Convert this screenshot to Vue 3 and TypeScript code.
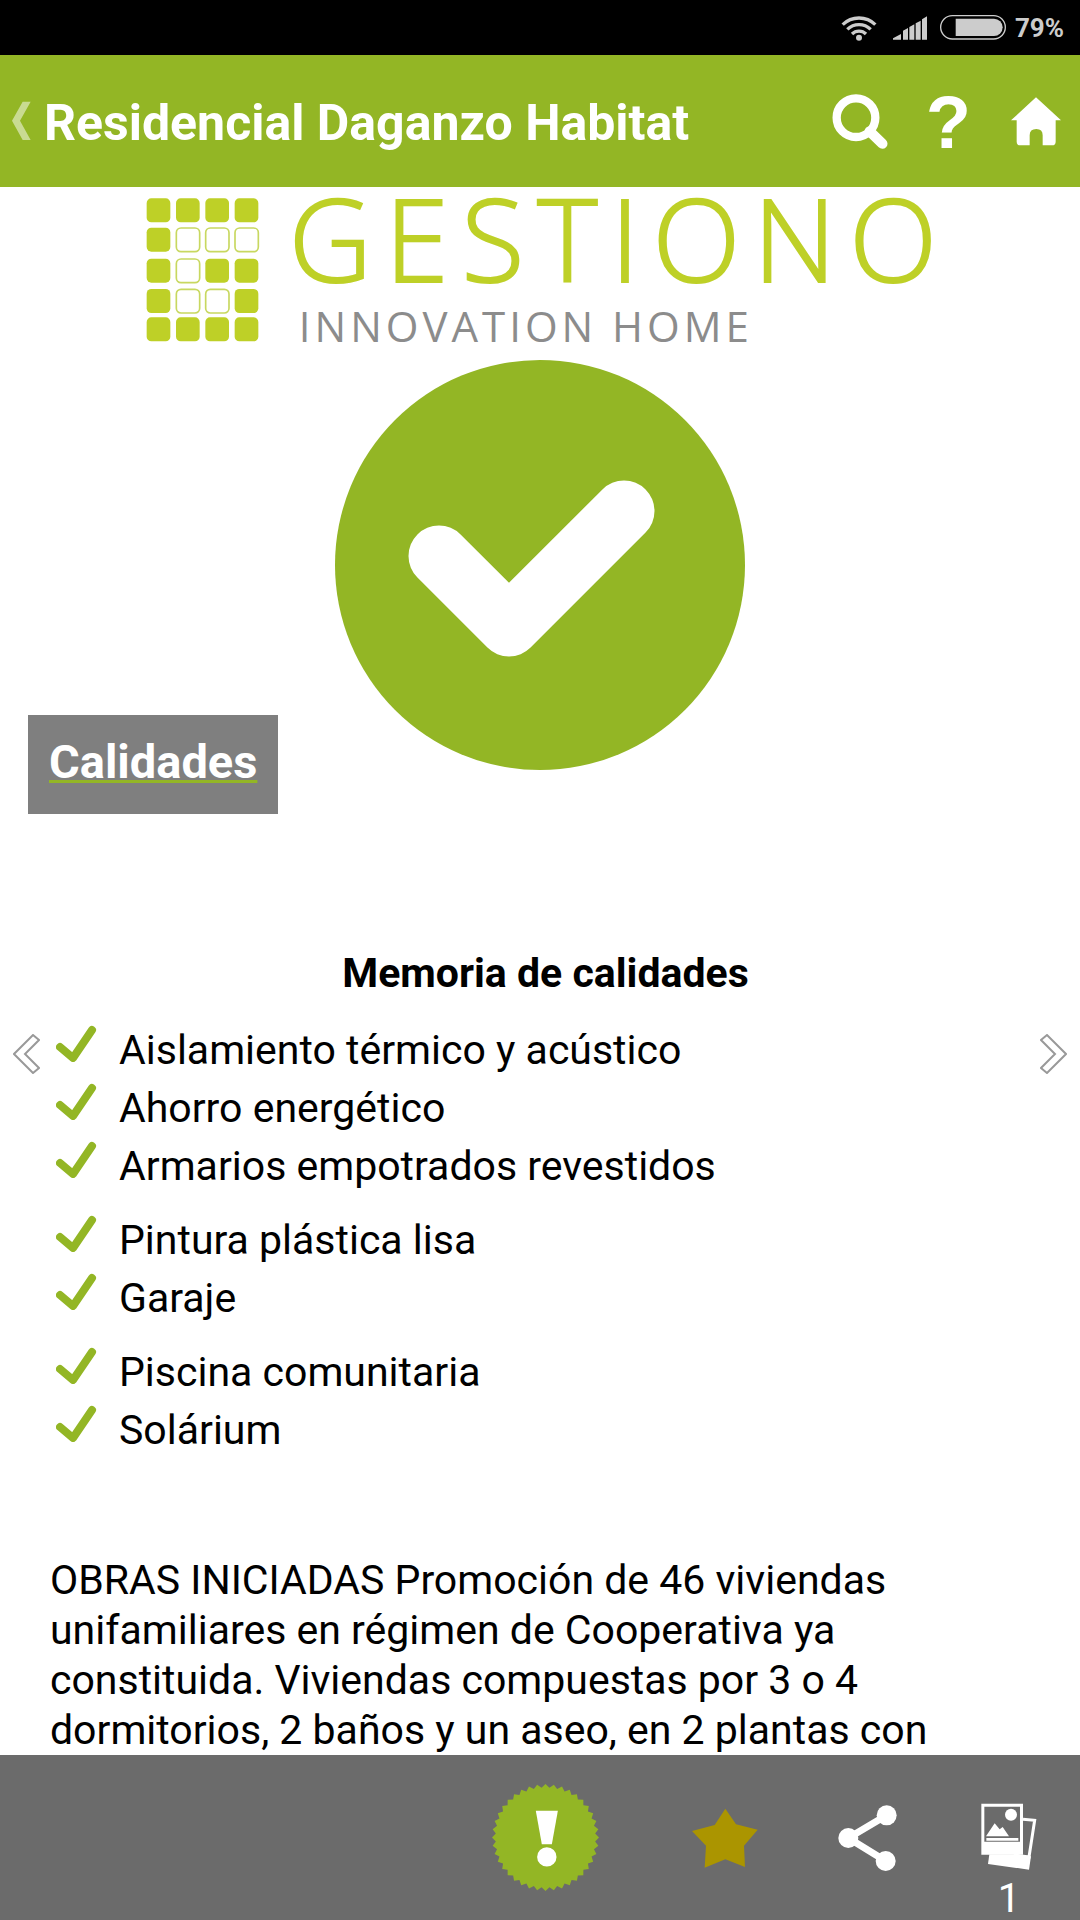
<script setup lang="ts">
interface Cell { x: number; y: number; filled: boolean }

const gridRows: string[] = ['1111', '1000', '1011', '1001', '1111']
const rowTops: number[] = [54, 142, 235, 326, 411]
const cells: Cell[] = gridRows.flatMap((row, r) =>
  row.split('').map((c, i) => ({ x: 52 + i * 88, y: rowTops[r], filled: c === '1' })),
)

const groups: string[][] = [
  ['Aislamiento térmico y acústico', 'Ahorro energético', 'Armarios empotrados revestidos'],
  ['Pintura plástica lisa', 'Garaje'],
  ['Piscina comunitaria', 'Solárium'],
]

const teeth = 40
const sealPoints: string = Array.from({ length: teeth * 2 }, (_, i) => {
  const radius = i % 2 === 0 ? 160 : 149
  const angle = (Math.PI * i) / teeth
  return `${(160 + radius * Math.sin(angle)).toFixed(1)},${(160 - radius * Math.cos(angle)).toFixed(1)}`
}).join(' ')
</script>

<template>
  <div class="app">
    <div class="status">
      <svg class="wifi" width="36" height="26" viewBox="124 42 108 78" aria-hidden="true">
        <circle cx="178" cy="110" r="9" />
        <g fill="none" stroke-width="10">
          <path d="M157 99a30 30 0 0 1 42 0" />
          <path d="M143 85a50 50 0 0 1 70 0" />
          <path d="M129 71a70 70 0 0 1 98 0" />
        </g>
      </svg>
      <svg class="signal" width="34" height="24" viewBox="279 48 102 72" aria-hidden="true">
        <path d="M279 119v-4l24-13v17zM309 119V92l15-8v35zM328 119V81l15-8v46zM347 119V70l15-8v57zM366 119V58l15-9v70z" />
      </svg>
      <svg class="battery" width="66" height="25" viewBox="421 45 198 75" aria-hidden="true">
        <rect x="423" y="47" width="194" height="70" rx="35" fill="none" stroke-width="4" />
        <path d="M468 56H583a26 26 0 0 1 0 52H468z" />
      </svg>
      <span class="percent">79%</span>
    </div>

    <header class="bar">
      <button class="back" aria-label="Volver">
        <svg width="20" height="40" viewBox="36 184 60 120"><path d="M68 186H92L60 243L92 301H68L36 243Z" fill="#c9db92" /></svg>
      </button>
      <h1>Residencial Daganzo Habitat</h1>
      <button class="tool" aria-label="Buscar">
        <svg width="56" height="55" viewBox="95 281 168 165">
          <circle cx="167" cy="352" r="58" fill="none" stroke="#fff" stroke-width="25" />
          <path d="M208 393L246 430" stroke="#fff" stroke-width="31" stroke-linecap="round" />
        </svg>
      </button>
      <button class="tool help" aria-label="Ayuda">?</button>
      <button class="tool" aria-label="Inicio">
        <svg width="50" height="49" viewBox="633 290 150 147">
          <path d="M708 291L783 360H767V424Q767 435 756 435H728V405Q728 386 709 386Q689 386 689 405V435H661Q650 435 650 424V360H633Z" fill="#fff" />
        </svg>
      </button>
    </header>

    <div class="stage">
      <main>
        <div class="logo">
          <svg width="114" height="144" viewBox="50 53 342 432" aria-hidden="true">
            <template v-for="cell in cells" :key="`${cell.x}-${cell.y}`">
              <rect v-if="cell.filled" :x="cell.x" :y="cell.y" width="71" height="72" rx="14" fill="#bed027" />
              <rect v-else :x="cell.x + 1" :y="cell.y + 1" width="70" height="71" rx="14" fill="#fff" stroke="#c8d860" stroke-width="5" />
            </template>
          </svg>
          <div class="words">
            <div class="brand">GESTIONO</div>
            <div class="tagline">INNOVATION HOME</div>
          </div>
        </div>

        <div class="hero">
          <a class="label" href="#calidades">Calidades</a>
          <svg class="seal" width="410" height="410" viewBox="0 0 410 410" aria-hidden="true">
            <circle cx="205" cy="205" r="205" fill="#93b625" />
            <path d="M104 196L174 266L289 151" fill="none" stroke="#fff" stroke-width="61" stroke-linecap="round" stroke-linejoin="round" />
          </svg>
        </div>

        <section id="calidades" class="text">
          <h2>Memoria de calidades</h2>
          <ul v-for="(group, g) in groups" :key="g">
            <li v-for="item in group" :key="item">
              <svg width="42" height="38" viewBox="0 0 42 38" aria-hidden="true">
                <path d="M4 23L17 34L36 6" fill="none" stroke="#93b625" stroke-width="8" stroke-linecap="round" stroke-linejoin="round" />
              </svg>
              <span>{{ item }}</span>
            </li>
          </ul>
          <p>
            OBRAS INICIADAS Promoción de 46 viviendas unifamiliares en régimen de Cooperativa ya
            constituida. Viviendas compuestas por 3 o 4 dormitorios, 2 baños y un aseo, en 2 plantas con
          </p>
        </section>
      </main>

      <button class="arrow prev" aria-label="Anterior">
        <svg width="27" height="40" viewBox="0 0 27 40"><path d="M20 1L26 6L12 20L26 34L20 39L1 20Z" /></svg>
      </button>
      <button class="arrow next" aria-label="Siguiente">
        <svg width="27" height="40" viewBox="0 0 27 40"><path d="M7 1L1 6L15 20L1 34L7 39L26 20Z" /></svg>
      </button>

      <footer>
        <button class="action alert" aria-label="Aviso">
          <svg width="107" height="107" viewBox="0 0 320 320">
            <polygon :points="sealPoints" fill="#93b625" />
            <path d="M131 80H197L179 180H149Z" fill="#fff" />
            <circle cx="164" cy="218" r="29" fill="#fff" />
          </svg>
        </button>
        <button class="action" aria-label="Favorito">
          <svg width="66" height="60" viewBox="696 203 198 180">
            <path d="M796 205L828 252L893 268L852 316L855 380L796 357L734 382L738 316L696 272L764 254Z" fill="#ab9500" />
          </svg>
        </button>
        <button class="action" aria-label="Compartir">
          <svg width="59" height="66" viewBox="173 193 177 198">
            <path d="M319 224L204 292L316 361" fill="none" stroke="#fff" stroke-width="21" />
            <g fill="#fff"><circle cx="319" cy="224" r="30" /><circle cx="204" cy="292" r="30" /><circle cx="316" cy="361" r="30" /></g>
          </svg>
        </button>
        <button class="action gallery" aria-label="Imágenes: 1">
          <svg width="56" height="67" viewBox="602 190 168 201">
            <path d="M728 239L763 242L746 352L700 346" fill="none" stroke="#fff" stroke-width="9" />
            <path d="M627 344H700L752 350L746 390L623 373Z" fill="#fff" />
            <path d="M603 192H728V345H603Z" fill="#fff" />
            <path d="M612 201H719V306H612Z" fill="#6b6b6b" />
            <circle cx="692" cy="225" r="18" fill="#fff" />
            <path d="M617 290L643 251L658 269L667 262L686 290Z" fill="#fff" />
            <path d="M618 299H714" stroke="#fff" stroke-width="8" />
          </svg>
          <span>1</span>
        </button>
      </footer>
    </div>
  </div>
</template>

<style>
body {
  margin: 0;
  background: #fff;
}
</style>

<style scoped>
.app {
  display: flex;
  flex-direction: column;
  min-height: 100vh;
  font-family: Roboto, "Liberation Sans", sans-serif;
  color: #000;
}
button {
  display: flex;
  align-items: center;
  justify-content: center;
  margin: 0;
  padding: 0;
  border: 0;
  background: none;
  color: #fff;
  font-family: inherit;
}
svg {
  display: block;
  flex: none;
}
.status {
  display: flex;
  flex: none;
  align-items: center;
  justify-content: flex-end;
  height: 55px;
  padding-right: 16px;
  background: #000;
  color: #ccc;
  fill: #ccc;
}
.status svg {
  stroke: none;
}
.wifi g,
.battery rect {
  stroke: #ccc;
}
.signal {
  margin-left: 16px;
}
.battery {
  margin: 0 9px 0 13px;
}
.percent {
  font-size: 26px;
  font-weight: 700;
  line-height: 32px;
}
.bar {
  display: flex;
  flex: none;
  align-items: center;
  height: 132px;
  padding: 0 19px 0 12px;
  background: #93b625;
}
h1 {
  flex: 1;
  margin: 0 0 0 12px;
  padding-top: 4px;
  color: #fff;
  font-size: 50px;
  font-weight: 700;
  line-height: 60px;
  white-space: nowrap;
}
.tool {
  margin-left: 40px;
}
.help {
  margin-left: 38px;
  padding-top: 4px;
  font-family: "Liberation Sans", Arial, sans-serif;
  font-size: 74px;
  font-weight: 700;
  line-height: 80px;
}
.stage {
  position: relative;
  display: flex;
  flex: 1;
  flex-direction: column;
}
main {
  flex: 1;
}
.logo {
  display: flex;
  justify-content: center;
  gap: 29px;
  padding-left: 16px;
}
.logo svg {
  margin-top: 11px;
}
.words {
  font-family: "Open Sans", "Noto Sans", sans-serif;
  white-space: nowrap;
}
.brand {
  margin-bottom: 15px;
  color: #bed027;
  font-size: 115px;
  font-weight: 300;
  line-height: 102px;
  letter-spacing: 13px;
  -webkit-text-stroke: 2px #bed027;
}
.tagline {
  margin-left: 10px;
  color: #8c8c8c;
  font-size: 42px;
  font-weight: 400;
  line-height: 44px;
  letter-spacing: 4px;
}
.hero {
  display: grid;
  grid-template-columns: 1fr auto 1fr;
  align-items: start;
  padding-top: 12px;
}
.hero .label {
  align-self: end;
  justify-self: start;
  margin-left: 28px;
  margin-top: 355px;
  padding: 17px 21px 22px;
  background: #7f7f7f;
  color: #fff;
  font-size: 47px;
  font-weight: 700;
  line-height: 60px;
  text-decoration: underline;
  text-decoration-color: #93b625;
  text-decoration-thickness: 3px;
}
.text {
  padding: 0 39px 0 50px;
  font-size: 41px;
}
h2 {
  margin: 134px 0 21px;
  font-size: 41px;
  font-weight: 700;
  line-height: 50px;
  text-align: center;
}
ul {
  margin: 0 0 16px;
  padding: 0;
  list-style: none;
}
li {
  display: flex;
  height: 58px;
  padding-left: 6px;
}
li svg {
  margin-top: 5px;
}
li span {
  margin-left: 21px;
  line-height: 62px;
}
p {
  margin: 98px 0 0;
  line-height: 50px;
}
.arrow {
  position: absolute;
  top: 50%;
  transform: translateY(-50%);
}
.arrow path {
  fill: #fff;
  stroke: #999;
  stroke-width: 2;
}
.prev {
  left: 13px;
}
.next {
  right: 13px;
}
footer {
  display: flex;
  flex: none;
  justify-content: flex-end;
  height: 165px;
  background: #6b6b6b;
}
.action {
  width: 142px;
}
.alert {
  margin-right: 38px;
}
.gallery {
  flex-direction: column;
  justify-content: flex-end;
  gap: 8px;
}
.gallery span {
  font-size: 40px;
  line-height: 42px;
}
</style>
